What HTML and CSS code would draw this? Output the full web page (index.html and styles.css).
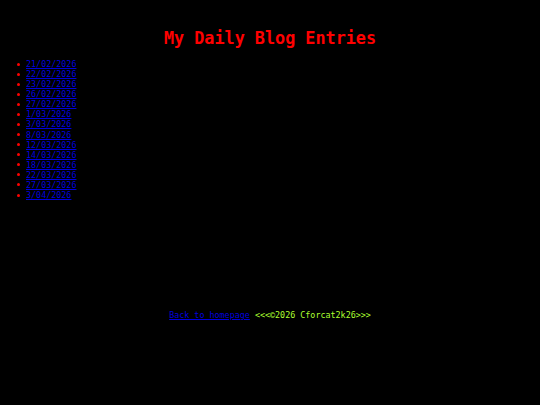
FILE: index.html
```html
<!DOCTYPE html>
<html>
<head>
<meta charset="utf-8">
<link rel="stylesheet" href="styles.css">
</head>
<body>
<h1 class="title">My Daily Blog Entries</h1>
<ul class="entries">
<li><a href="#">21/02/2026</a></li>
<li><a href="#">22/02/2026</a></li>
<li><a href="#">23/02/2026</a></li>
<li><a href="#">26/02/2026</a></li>
<li><a href="#">27/02/2026</a></li>
<li><a href="#">1/03/2026</a></li>
<li><a href="#">3/03/2026</a></li>
<li><a href="#">8/03/2026</a></li>
<li><a href="#">12/03/2026</a></li>
<li><a href="#">14/03/2026</a></li>
<li><a href="#">18/03/2026</a></li>
<li><a href="#">22/03/2026</a></li>
<li><a href="#">27/03/2026</a></li>
<li><a href="#">3/04/2026</a></li>
</ul>
<p class="footer"><a href="#">Back to homepage</a> <span class="copy">&lt;&lt;&lt;&copy;2026 Cforcat2k26&gt;&gt;&gt;</span></p>
</body>
</html>
```
FILE: styles.css
```css
html, body {
  margin: 0;
  padding: 0;
  background: #000;
}
body {
  font-family: "DejaVu Sans Mono", monospace;
  color: #adff2f;
}
.title {
  margin: 28px 0 0 0;
  font-size: 16.8px;
  line-height: 20px;
  font-weight: bold;
  color: #ff0000;
  text-align: center;
}
.entries {
  margin: 11px 0 0 0;
  padding: 0 0 0 17px;
  list-style: none;
  font-size: 8.4px;
  line-height: 10.08px;
}
.entries li {
  display: flex;
  align-items: center;
}
.entries li::before {
  content: "";
  width: 3px;
  height: 3px;
  border-radius: 50%;
  background: #ff0000;
  margin-right: 6px;
  flex: none;
}
.entries a {
  color: #0000dd;
}
.footer {
  margin: 110px 0 0 0;
  font-size: 8.4px;
  line-height: 10px;
  text-align: center;
}
.footer a {
  color: #0000dd;
}
.copy {
  color: #adff2f;
}
```
